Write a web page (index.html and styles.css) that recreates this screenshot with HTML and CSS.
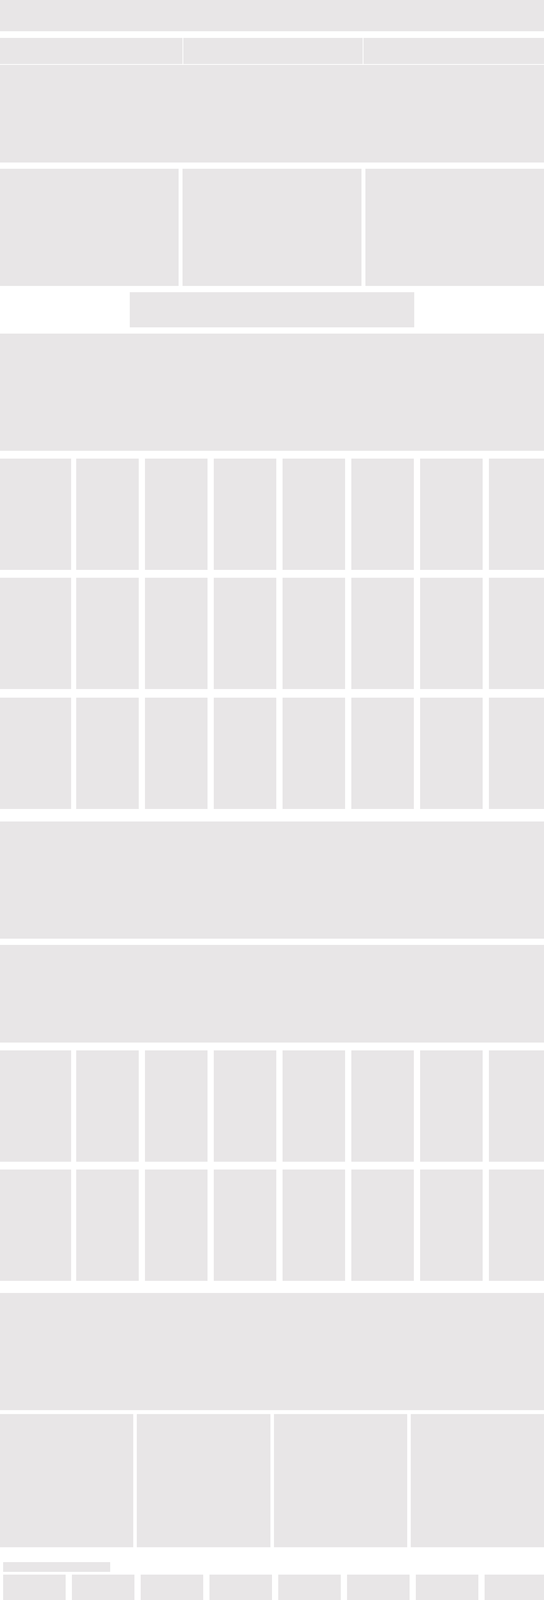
FILE: index.html
```html
<!DOCTYPE html>
<html lang="en">
<head>
<meta charset="utf-8">
<title>Page</title>
<link rel="stylesheet" href="styles.css">
</head>
<body>
<div class="page">
  <header class="topbar block"></header>
  <nav class="tabs">
    <div class="block"></div>
    <div class="block"></div>
    <div class="block"></div>
  </nav>
  <section class="banner block"></section>
  <section class="cards3">
    <div class="block"></div>
    <div class="block"></div>
    <div class="block"></div>
  </section>
  <div class="btn block"></div>
  <section class="hero block"></section>

  <section class="rows rows-a">
    <div class="row">
      <div class="block"></div><div class="block"></div><div class="block"></div><div class="block"></div>
      <div class="block"></div><div class="block"></div><div class="block"></div><div class="block"></div>
    </div>
    <div class="row">
      <div class="block"></div><div class="block"></div><div class="block"></div><div class="block"></div>
      <div class="block"></div><div class="block"></div><div class="block"></div><div class="block"></div>
    </div>
    <div class="row row-last">
      <div class="block"></div><div class="block"></div><div class="block"></div><div class="block"></div>
      <div class="block"></div><div class="block"></div><div class="block"></div><div class="block"></div>
    </div>
  </section>

  <section class="panel panel-a block"></section>
  <section class="panel panel-b block"></section>

  <section class="rows rows-b">
    <div class="row">
      <div class="block"></div><div class="block"></div><div class="block"></div><div class="block"></div>
      <div class="block"></div><div class="block"></div><div class="block"></div><div class="block"></div>
    </div>
    <div class="row">
      <div class="block"></div><div class="block"></div><div class="block"></div><div class="block"></div>
      <div class="block"></div><div class="block"></div><div class="block"></div><div class="block"></div>
    </div>
  </section>

  <section class="panel panel-c block"></section>

  <section class="cards4">
    <div class="block"></div>
    <div class="block"></div>
    <div class="block"></div>
    <div class="block"></div>
  </section>

  <section class="shelf shelf-first">
    <div class="shelf-title block"></div>
    <div class="shelf-items">
      <div class="block"></div><div class="block"></div><div class="block"></div><div class="block"></div>
      <div class="block"></div><div class="block"></div><div class="block"></div><div class="block"></div>
    </div>
  </section>

  <section class="shelf shelf-second">
    <div class="shelf-title block"></div>
    <div class="shelf-items">
      <div class="block"></div><div class="block"></div><div class="block"></div><div class="block"></div>
    </div>
  </section>

  <div class="btn btn-bottom block"></div>
  <footer class="footer block"></footer>
</div>
</body>
</html>
```

FILE: styles.css
```css
html, body {
  margin: 0;
  padding: 0;
  background: #ffffff;
  font-family: "Liberation Sans", Arial, sans-serif;
}

body {
  overflow-x: hidden;
}

.page {
  width: 1392px;
  display: flex;
  flex-direction: column;
  overflow: hidden;
}

.block {
  background: #e8e6e7;
}

.topbar {
  height: 80px;
}

.tabs {
  margin-top: 17px;
  height: 67px;
  display: grid;
  grid-template-columns: 467px 459px 1fr;
  column-gap: 2px;
}

.banner {
  margin-top: 2px;
  height: 250px;
}

.cards3 {
  margin-top: 16px;
  height: 300px;
  display: grid;
  grid-template-columns: repeat(3, 1fr);
  column-gap: 10px;
}

.btn {
  margin-top: 16px;
  width: 728px;
  height: 90px;
  align-self: center;
}

.hero {
  margin-top: 16px;
  height: 300px;
}

.rows {
  display: flex;
  flex-direction: column;
  row-gap: 20px;
}

.rows-a {
  margin-top: 20px;
}

.rows-a .row-last {
  margin-top: 2px;
}

.row {
  height: 285px;
  display: grid;
  grid-template-columns: 179px repeat(7, 160px);
  column-gap: 16px;
  overflow: hidden;
}

.row > :first-child {
  margin-right: -3px;
}

.panel-a {
  margin-top: 32px;
  height: 300px;
}

.panel-b {
  margin-top: 16px;
  height: 250px;
}

.rows-b {
  margin-top: 20px;
}

.panel-c {
  margin-top: 31px;
  height: 300px;
}

.cards4 {
  margin-top: 10px;
  height: 341px;
  display: grid;
  grid-template-columns: repeat(4, 1fr);
  column-gap: 9px;
}

.shelf {
  display: flex;
  flex-direction: column;
  row-gap: 7px;
  padding-left: 8px;
}

.shelf-first {
  margin-top: 38px;
}

.shelf-second {
  margin-top: 43px;
}

.shelf-title {
  width: 274px;
  height: 25px;
}

.shelf-items {
  height: 300px;
  display: grid;
  grid-auto-flow: column;
  grid-auto-columns: 160px;
  column-gap: 16px;
  justify-content: start;
  overflow: hidden;
}

.btn-bottom {
  margin-top: 30px;
}

.footer {
  margin-top: 16px;
  height: 146px;
}
```
